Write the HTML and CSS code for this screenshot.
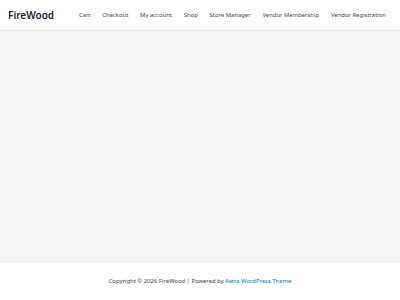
FILE: index.html
```html
<!DOCTYPE html>
<html>
<head>
<meta charset="utf-8">
<link rel="stylesheet" href="styles.css">
</head>
<body>
<header class="site-header">
  <div class="brand">FireWood</div>
  <nav class="menu">
    <span class="item">Cart</span>
    <span class="item">Checkout</span>
    <span class="item">My account</span>
    <span class="item">Shop</span>
    <span class="item">Store Manager</span>
    <span class="item">Vendor Membership</span>
    <span class="item">Vendor Registration</span>
  </nav>
</header>
<main class="content"></main>
<footer class="site-footer">
  <p class="credit">Copyright © 2026 FireWood | Powered by <span class="link">Astra WordPress Theme</span></p>
</footer>
</body>
</html>
```
FILE: styles.css
```css
html, body { margin: 0; padding: 0; }
body {
  width: 400px;
  height: 300px;
  display: flex;
  flex-direction: column;
  font-family: "Noto Sans", sans-serif;
  color: #3a3a3a;
  background: #ffffff;
}
.site-header {
  height: 31px;
  box-sizing: border-box;
  border-bottom: 1px solid #e6e9ee;
  display: flex;
  align-items: center;
  padding: 0 14px 1px 8px;
  background: #fff;
}
.brand {
  font-size: 10px;
  font-weight: 600;
  color: #1e1e2a;
  flex: 1;
  white-space: nowrap;
}
.menu {
  display: flex;
  gap: 11.8px;
  font-size: 5.9px;
  white-space: nowrap;
}
.item { color: #3a3f50; }
.content {
  flex: 1;
  background: #f0f5fa;
}
.site-footer {
  height: 39px;
  box-sizing: border-box;
  border-top: 1px solid #e6e9ee;
  display: flex;
  align-items: center;
  justify-content: center;
  background: #fff;
}
.credit {
  margin: 0;
  font-size: 5.9px;
  color: #3a3f50;
  white-space: nowrap;
}
.link { color: #0274be; }
```
